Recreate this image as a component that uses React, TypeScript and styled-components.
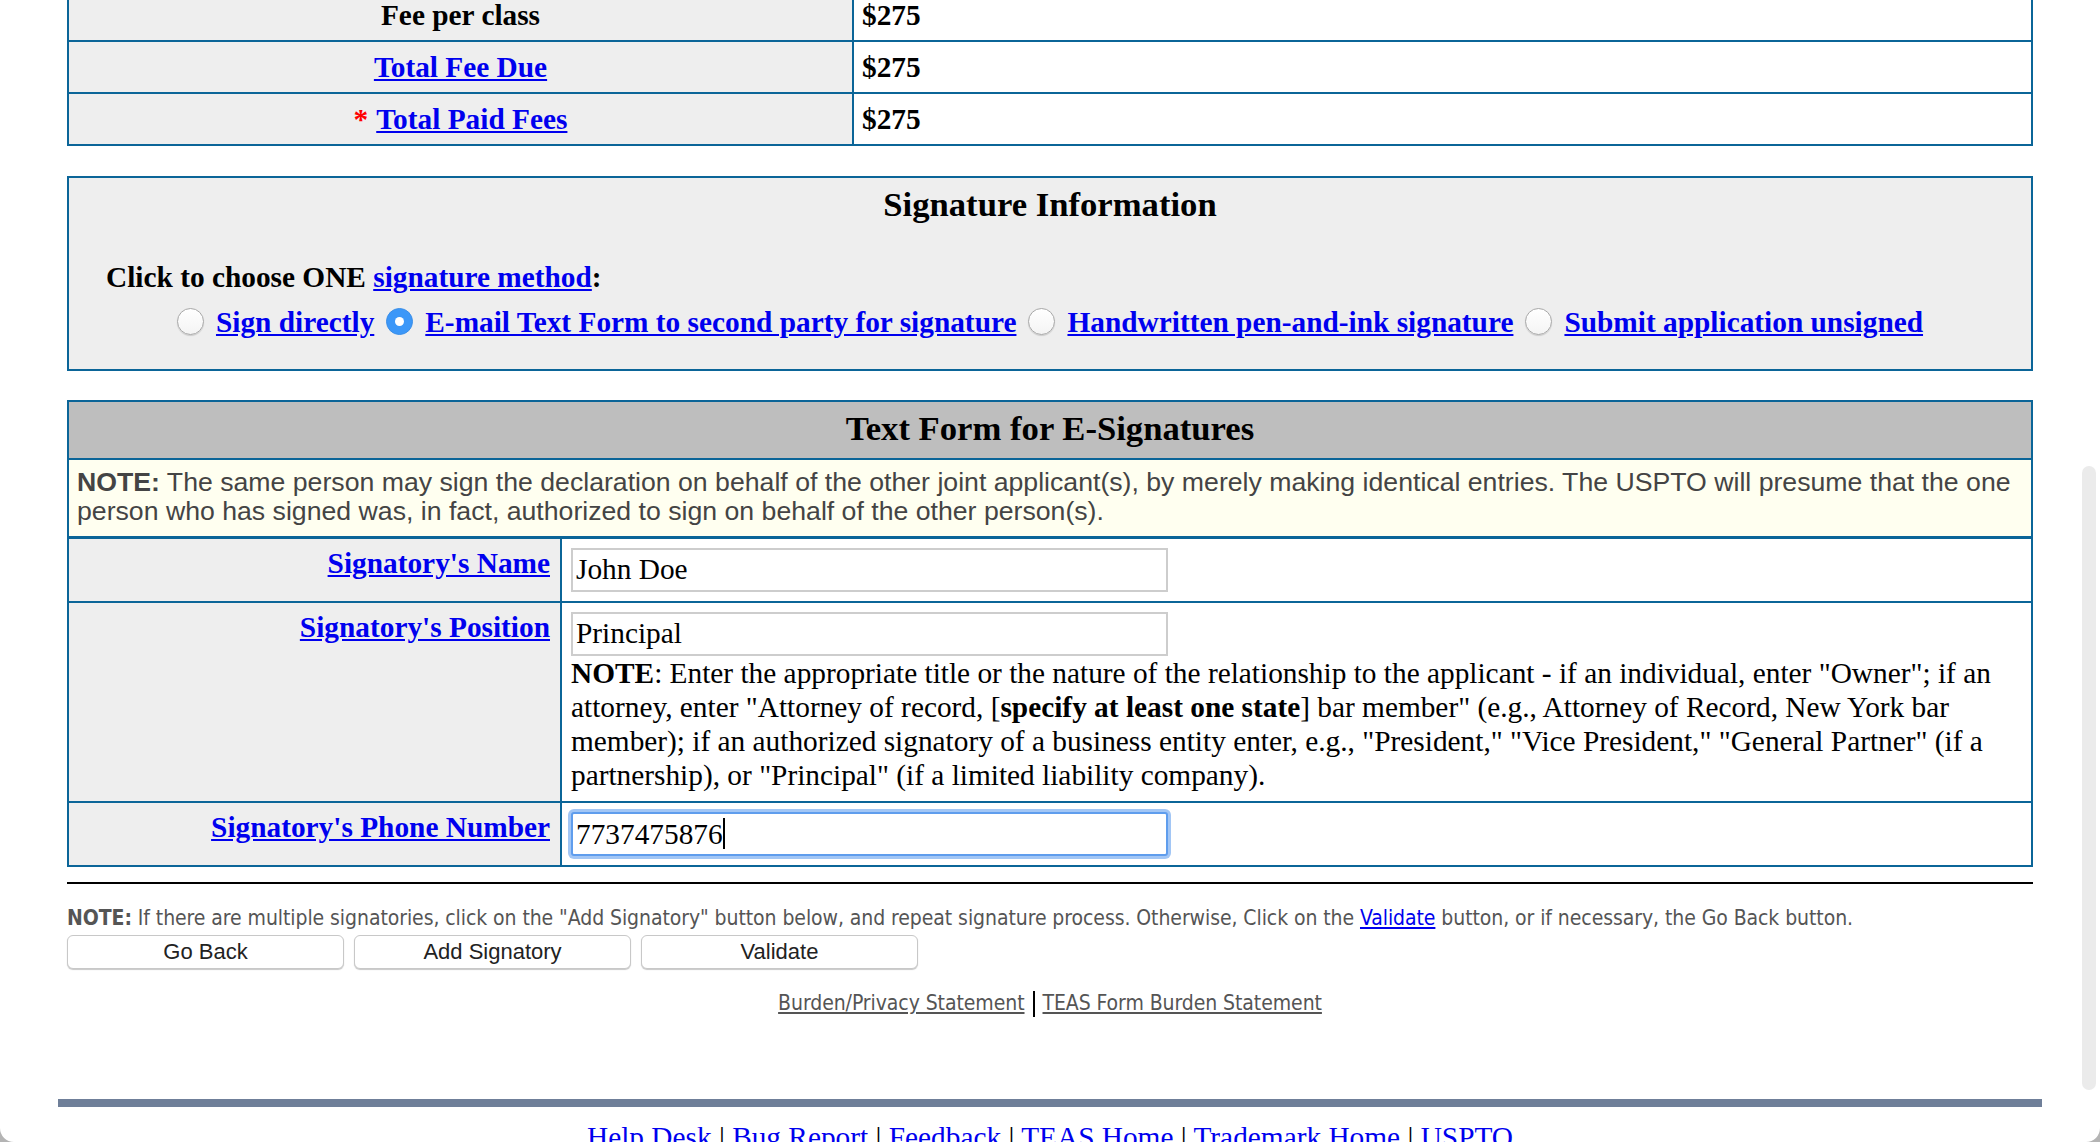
import React from "react";
import styled, { createGlobalStyle } from "styled-components";

const BLUE = "#0b6598";
const LINK = "#0000ee";
const SERIF = `"Liberation Serif", "Times New Roman", Times, serif`;
const SANS = `"Liberation Sans", Arial, Helvetica, sans-serif`;
const TAHOMA = `"DejaVu Sans Condensed", "DejaVu Sans", Verdana, sans-serif`;

const Global = createGlobalStyle`
  html, body { margin: 0; padding: 0; background: #fff; }
  body { font-family: ${SERIF}; color: #000; }
  * { box-sizing: border-box; }
`;

const Viewport = styled.div`
  position: relative;
  width: 2100px;
  height: 1142px;
  overflow: hidden;
  background: #fff;
`;

const Page = styled.main`
  display: flex;
  flex-direction: column;
  align-items: center;
  margin-top: -12px;
`;

const Panel = styled.section<{ $bg?: string; $gap?: number }>`
  width: 1966px;
  border: 2px solid ${BLUE};
  background: ${(p) => p.$bg || "#fff"};
  margin-top: ${(p) => p.$gap || 0}px;
`;

/* ---------- fee table ---------- */
const FeeRow = styled.div`
  display: grid;
  grid-template-columns: 785px 1fr;
  height: 50px;
  & + & {
    height: 52px;
    border-top: 2px solid ${BLUE};
  }
`;

const FeeLabel = styled.div`
  background: #eeeeee;
  border-right: 2px solid ${BLUE};
  display: flex;
  align-items: center;
  justify-content: center;
  font: bold 29.33px/34px ${SERIF};
`;

const FeeValue = styled.div`
  display: flex;
  align-items: center;
  padding-left: 8px;
  font: bold 29.33px/34px ${SERIF};
`;

const Link = styled.a`
  color: ${LINK};
  text-decoration: underline;
  cursor: pointer;
`;

const Required = styled.span`
  color: #ff0000;
  margin-right: 8px;
`;

/* ---------- signature information ---------- */
const SigBox = styled(Panel)`
  padding: 6px 0 30px;
`;

const Heading = styled.h2`
  margin: 0;
  text-align: center;
  font: bold 34.67px/40px ${SERIF};
`;

const ChooseLine = styled.p`
  margin: 35.5px 0 0;
  padding-left: 37px;
  font: bold 29.33px/34px ${SERIF};
`;

const RadioRow = styled.div`
  margin-top: 11px;
  display: flex;
  justify-content: center;
  gap: 12px;
  font: bold 29.33px/34px ${SERIF};
`;

const RadioOption = styled.label`
  display: inline-flex;
  align-items: center;
  gap: 12px;
`;

const RadioDot = styled.span<{ $checked?: boolean }>`
  flex: none;
  width: 27px;
  height: 27px;
  border-radius: 50%;
  display: inline-flex;
  align-items: center;
  justify-content: center;
  background: ${(p) =>
    p.$checked ? "#3b97f8" : "linear-gradient(#ffffff, #f4f4f4)"};
  border: 1px solid ${(p) => (p.$checked ? "#3a8ee8" : "#a8a8a8")};
  box-shadow: ${(p) =>
    p.$checked ? "none" : "0 1px 1px rgba(0,0,0,0.15)"};
  &::after {
    content: "";
    display: ${(p) => (p.$checked ? "block" : "none")};
    width: 9px;
    height: 9px;
    border-radius: 50%;
    background: #fff;
  }
`;

/* ---------- text form ---------- */
const FormHeader = styled.div`
  height: 58px;
  padding-top: 6px;
  background: #bebebe;
  border-bottom: 2px solid ${BLUE};
`;

const Notice = styled.div`
  background: #fffff0;
  border-bottom: 3px solid ${BLUE};
  padding: 8px 8px 0 8px;
  height: 79px;
  font: 26.67px/29.3px ${SANS};
  color: #444;
`;

const FormRow = styled.div`
  display: grid;
  grid-template-columns: 493px 1fr;
  & + & {
    border-top: 2px solid ${BLUE};
  }
`;

const FieldLabel = styled.div`
  background: #eeeeee;
  border-right: 2px solid ${BLUE};
  text-align: right;
  padding: 7px 10px 0 0;
  font: bold 29.33px/34px ${SERIF};
`;

const FieldCell = styled.div`
  padding: 9px 8px 9px 9px;
`;

const TextInput = styled.input`
  display: block;
  width: 597px;
  height: 44px;
  margin: 0;
  padding: 0 3px;
  border: 2px solid #cdcdcd;
  background: #fff;
  font: 29.33px ${SERIF};
  color: #000;
  outline: none;
`;

const FocusedField = styled.div`
  display: flex;
  align-items: center;
  width: 597px;
  height: 44px;
  padding: 0 3px;
  border: 2px solid #5f9ded;
  box-shadow: 0 0 0 3px #a2c6f5;
  border-radius: 3px;
  background: #fff;
  font: 29.33px/34px ${SERIF};
`;

const Caret = styled.span`
  display: inline-block;
  width: 2px;
  height: 31px;
  background: #000;
`;

const FieldNote = styled.p`
  margin: 0;
  font: 29.33px/34px ${SERIF};
`;

/* ---------- bottom ---------- */
const Rule = styled.hr`
  width: 1966px;
  margin: 15px 0 0;
  border: 0;
  height: 2px;
  background: #000;
`;

const BottomNote = styled.p`
  width: 1966px;
  margin: 22px 0 0;
  font: 21px/25px ${TAHOMA};
  font-stretch: condensed;
  letter-spacing: -0.07px;
  color: #555;
`;

const ButtonBar = styled.div`
  width: 1966px;
  margin-top: 4px;
  display: flex;
  gap: 10px;
`;

const PushButton = styled.button`
  width: 277px;
  height: 34px;
  padding: 0;
  border: 1px solid #c8c8c8;
  border-radius: 6px;
  background: #fff;
  box-shadow: 0 1px 1px rgba(0, 0, 0, 0.22);
  font: 22px ${SANS};
  color: #222;
`;

const FooterLinks = styled.nav`
  margin-top: 22px;
  display: flex;
  align-items: center;
  gap: 8px;
  font: 21px/25px ${TAHOMA};
  font-stretch: condensed;
  letter-spacing: -0.07px;
  color: #555;
`;

const GrayLink = styled.a`
  color: #555;
  text-decoration: underline;
`;

const Pipe = styled.span`
  display: inline-block;
  width: 2px;
  height: 26px;
  background: #000;
`;

const BottomBar = styled.div`
  width: 1984px;
  height: 8px;
  margin-top: 82px;
  background: #6f7f99;
`;

const SiteLinks = styled.nav`
  margin-top: 13.5px;
  font: 29.33px/34px ${SERIF};
  color: #000;
  white-space: nowrap;
`;

/* ---------- window chrome overlays ---------- */
const ScrollThumb = styled.div`
  position: absolute;
  right: 4px;
  top: 466px;
  width: 14px;
  height: 624px;
  border-radius: 7px;
  background: #ebebeb;
`;

const Corner = styled.svg<{ $side: "left" | "right" }>`
  position: absolute;
  bottom: 0;
  ${(p) => (p.$side === "left" ? "left: 0;" : "right: 0;")}
  width: 14px;
  height: 14px;
`;

const sigOptions = [
  { label: "Sign directly", checked: false },
  { label: "E-mail Text Form to second party for signature", checked: true },
  { label: "Handwritten pen-and-ink signature", checked: false },
  { label: "Submit application unsigned", checked: false },
];

const siteLinks = [
  "Help Desk",
  "Bug Report",
  "Feedback",
  "TEAS Home",
  "Trademark Home",
  "USPTO",
];

export default function App() {
  return (
    <Viewport>
      <Global />
      <Page>
        <Panel>
          <FeeRow>
            <FeeLabel>Fee per class</FeeLabel>
            <FeeValue>$275</FeeValue>
          </FeeRow>
          <FeeRow>
            <FeeLabel>
              <Link>Total Fee Due</Link>
            </FeeLabel>
            <FeeValue>$275</FeeValue>
          </FeeRow>
          <FeeRow>
            <FeeLabel>
              <Required>*</Required>
              <Link>Total Paid Fees</Link>
            </FeeLabel>
            <FeeValue>$275</FeeValue>
          </FeeRow>
        </Panel>

        <SigBox $bg="#eeeeee" $gap={30}>
          <Heading>Signature Information</Heading>
          <ChooseLine>
            Click to choose ONE <Link>signature method</Link>:
          </ChooseLine>
          <RadioRow>
            {sigOptions.map((o) => (
              <RadioOption key={o.label}>
                <RadioDot $checked={o.checked} />
                <Link>{o.label}</Link>
              </RadioOption>
            ))}
          </RadioRow>
        </SigBox>

        <Panel $gap={29}>
          <FormHeader>
            <Heading as="h3">Text Form for E-Signatures</Heading>
          </FormHeader>
          <Notice>
            <b>NOTE:</b> The same person may sign the declaration on behalf of
            the other joint applicant(s), by merely making identical entries.
            The USPTO will presume that the one person who has signed was, in
            fact, authorized to sign on behalf of the other person(s).
          </Notice>
          <FormRow>
            <FieldLabel>
              <Link>Signatory's Name</Link>
            </FieldLabel>
            <FieldCell>
              <TextInput defaultValue="John Doe" readOnly />
            </FieldCell>
          </FormRow>
          <FormRow>
            <FieldLabel>
              <Link>Signatory's Position</Link>
            </FieldLabel>
            <FieldCell>
              <TextInput defaultValue="Principal" readOnly />
              <FieldNote>
                <b>NOTE</b>: Enter the appropriate title or the nature of the
                relationship to the applicant - if an individual, enter
                "Owner"; if an attorney, enter "Attorney of record, [
                <b>specify at least one state</b>] bar member" (e.g., Attorney
                of Record, New York bar member); if an authorized signatory of a
                business entity enter, e.g., "President," "Vice President,"
                "General Partner" (if a partnership), or "Principal" (if a
                limited liability company).
              </FieldNote>
            </FieldCell>
          </FormRow>
          <FormRow>
            <FieldLabel>
              <Link>Signatory's Phone Number</Link>
            </FieldLabel>
            <FieldCell>
              <FocusedField role="textbox">
                7737475876
                <Caret />
              </FocusedField>
            </FieldCell>
          </FormRow>
        </Panel>

        <Rule />
        <BottomNote>
          <b>NOTE:</b> If there are multiple signatories, click on the "Add
          Signatory" button below, and repeat signature process. Otherwise,
          Click on the <Link>Validate</Link> button, or if necessary, the Go
          Back button.
        </BottomNote>
        <ButtonBar>
          <PushButton>Go Back</PushButton>
          <PushButton>Add Signatory</PushButton>
          <PushButton>Validate</PushButton>
        </ButtonBar>
        <FooterLinks>
          <GrayLink>Burden/Privacy Statement</GrayLink>
          <Pipe />
          <GrayLink>TEAS Form Burden Statement</GrayLink>
        </FooterLinks>
        <BottomBar />
        <SiteLinks>
          {siteLinks.map((l, i) => (
            <React.Fragment key={l}>
              {i > 0 && " | "}
              <Link>{l}</Link>
            </React.Fragment>
          ))}
        </SiteLinks>
      </Page>

      <ScrollThumb />
      <Corner $side="left" viewBox="0 0 14 14">
        <path d="M0 0 L0 14 L14 14 A14 14 0 0 1 0 0 Z" fill="#b4b4b4" />
      </Corner>
      <Corner $side="right" viewBox="0 0 14 14">
        <path d="M14 0 L14 14 L0 14 A14 14 0 0 0 14 0 Z" fill="#b4b4b4" />
      </Corner>
    </Viewport>
  );
}
